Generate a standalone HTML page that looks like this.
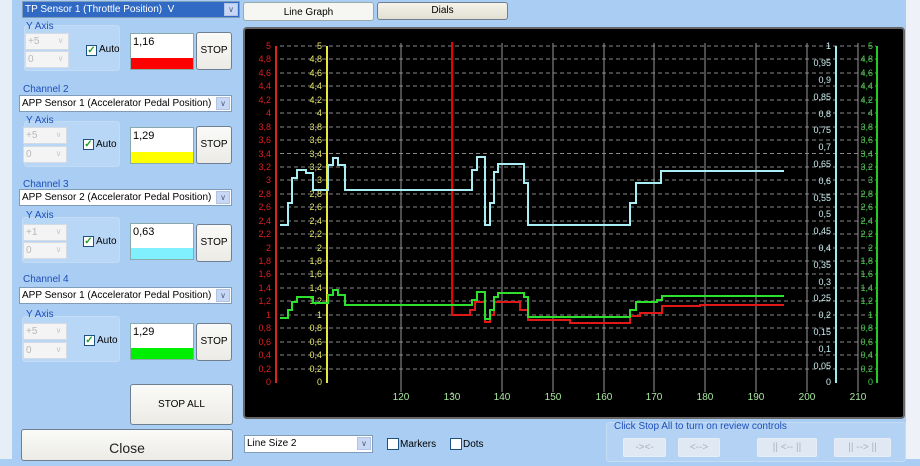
<!DOCTYPE html>
<html><head><meta charset="utf-8"><style>
*{margin:0;padding:0;box-sizing:border-box}
body{width:920px;height:459px;overflow:hidden;background:#a9cdf3;font-family:"Liberation Sans",sans-serif;font-size:10px;position:relative}
.a{position:absolute}
.strip{left:0;top:0;width:12px;height:459px;background:#e6eef8}
.rstrip{left:906px;top:0;width:14px;height:459px;background:#eef2f8}
.grp{background:#b8d6f5;border:1px solid #c4dcf4;border-radius:3px}
.dd{background:#fff;border:1px solid #7f9db9;height:17px;font-size:10px;line-height:15px;padding-left:2px;color:#000;white-space:nowrap;overflow:hidden}
.dd .ar{position:absolute;right:1px;top:1px;width:14px;height:13px;background:#c8d8f4;border:1px solid #b0c4e8;color:#4d6185;font-size:8px;text-align:center;line-height:11px}
.lbl{color:#1f4fb8;font-size:10px}
.dis{background:#f4f4f4;border:1px solid #d4dbe4;color:#b8b8b8;height:17px;width:44px;font-size:10px;line-height:15px;padding-left:2px}
.dis .ar{position:absolute;right:1px;top:1px;width:13px;height:13px;color:#c9c9c9;font-size:8px;text-align:center;line-height:12px}
.cb{width:11px;height:11px;border:1px solid #1c5180;background:#fff;font-size:10px;line-height:9px;color:#21a121;text-align:center;font-weight:bold}
.val{background:#fff;border:1px solid #8aa;font-size:11px;padding:2px 0 0 2px}
.btn{background:linear-gradient(#fafaf8,#ecebe6);border:1px solid #6f7f90;border-radius:3px;text-align:center;font-size:10px;color:#000}
.rb{background:#dfe8f3;border:1px solid #e8eef6;border-radius:2px;color:#a8b4c2;text-align:center;font-size:10px;line-height:17px}
</style></head><body>
<div class="a strip"></div><div class="a rstrip"></div>

<!-- Channel 1 -->
<div class="a dd" style="left:22px;top:1px;width:218px;background:#316ac5;color:#fff;border-color:#7f9db9">TP Sensor 1 (Throttle Position)&nbsp; V<div class="ar">&#8744;</div></div>
<div class="a grp" style="left:24px;top:25px;width:96px;height:46px"></div>
<div class="a lbl" style="left:26px;top:21px">Y Axis</div>
<div class="a dis" style="left:25px;top:33px;height:17px"><span>+5</span><div class="ar">&#8744;</div></div>
<div class="a dis" style="left:25px;top:51px"><span>0</span><div class="ar">&#8744;</div></div>
<div class="a cb" style="left:86px;top:45px">&#10003;</div><div class="a" style="left:99px;top:44px;font-size:10px">Auto</div>
<div class="a val" style="left:130px;top:33px;width:64px;height:37px">1,16<div class="a" style="left:0;top:24px;width:62px;height:11px;background:#f00"></div></div>
<div class="a btn" style="left:196px;top:32px;width:36px;height:38px;line-height:36px">STOP</div>

<!-- Channel 2 -->
<div class="a lbl" style="left:23px;top:84px">Channel 2</div>
<div class="a dd" style="left:19px;top:95px;width:213px">APP Sensor 1 (Accelerator Pedal Position)&nbsp; V<div class="ar">&#8744;</div></div>
<div class="a grp" style="left:24px;top:121px;width:96px;height:46px"></div>
<div class="a lbl" style="left:26px;top:115px">Y Axis</div>
<div class="a dis" style="left:23px;top:127px"><span>+5</span><div class="ar">&#8744;</div></div>
<div class="a dis" style="left:23px;top:146px"><span>0</span><div class="ar">&#8744;</div></div>
<div class="a cb" style="left:83px;top:139px">&#10003;</div><div class="a" style="left:96px;top:139px">Auto</div>
<div class="a val" style="left:130px;top:127px;width:64px;height:37px">1,29<div class="a" style="left:0;top:24px;width:62px;height:11px;background:#ff0"></div></div>
<div class="a btn" style="left:196px;top:126px;width:36px;height:38px;line-height:36px">STOP</div>

<!-- Channel 3 -->
<div class="a lbl" style="left:23px;top:179px">Channel 3</div>
<div class="a dd" style="left:19px;top:189px;width:213px">APP Sensor 2 (Accelerator Pedal Position)&nbsp; V<div class="ar">&#8744;</div></div>
<div class="a grp" style="left:22px;top:217px;width:98px;height:46px"></div>
<div class="a lbl" style="left:26px;top:210px">Y Axis</div>
<div class="a dis" style="left:23px;top:224px"><span>+1</span><div class="ar">&#8744;</div></div>
<div class="a dis" style="left:23px;top:242px"><span>0</span><div class="ar">&#8744;</div></div>
<div class="a cb" style="left:83px;top:236px">&#10003;</div><div class="a" style="left:96px;top:236px">Auto</div>
<div class="a val" style="left:130px;top:223px;width:64px;height:37px">0,63<div class="a" style="left:0;top:24px;width:62px;height:11px;background:#80f0ff"></div></div>
<div class="a btn" style="left:196px;top:224px;width:36px;height:38px;line-height:36px">STOP</div>

<!-- Channel 4 -->
<div class="a lbl" style="left:23px;top:274px">Channel 4</div>
<div class="a dd" style="left:19px;top:287px;width:213px">APP Sensor 1 (Accelerator Pedal Position)&nbsp; V<div class="ar">&#8744;</div></div>
<div class="a grp" style="left:22px;top:316px;width:98px;height:46px"></div>
<div class="a lbl" style="left:26px;top:309px">Y Axis</div>
<div class="a dis" style="left:23px;top:323px"><span>+5</span><div class="ar">&#8744;</div></div>
<div class="a dis" style="left:23px;top:342px"><span>0</span><div class="ar">&#8744;</div></div>
<div class="a cb" style="left:84px;top:335px">&#10003;</div><div class="a" style="left:97px;top:335px">Auto</div>
<div class="a val" style="left:130px;top:323px;width:64px;height:37px">1,29<div class="a" style="left:0;top:24px;width:62px;height:11px;background:#0e0"></div></div>
<div class="a btn" style="left:196px;top:323px;width:36px;height:38px;line-height:36px">STOP</div>

<div class="a btn" style="left:130px;top:384px;width:103px;height:41px;line-height:40px">STOP ALL</div>
<div class="a btn" style="left:21px;top:429px;width:212px;height:32px;line-height:36px;font-size:14px;color:#222">Close</div>

<!-- tabs -->
<div class="a btn" style="left:243px;top:2px;width:131px;height:19px;line-height:19px;background:#f6f6f2;border-color:#9aa">Line Graph</div>
<div class="a btn" style="left:377px;top:2px;width:131px;height:18px;line-height:16px;background:linear-gradient(#f5f3ea,#e2dfd2)">Dials</div>

<!-- bottom -->
<div class="a dd" style="left:244px;top:435px;width:129px;height:18px">Line Size 2<div class="ar">&#8744;</div></div>
<div class="a cb" style="left:387px;top:438px;width:12px;height:12px"></div><div class="a" style="left:400px;top:439px">Markers</div>
<div class="a cb" style="left:450px;top:438px;width:12px;height:12px"></div><div class="a" style="left:463px;top:439px">Dots</div>
<div class="a grp" style="left:606px;top:422px;width:300px;height:40px;background:#b4d3f4"></div>
<div class="a lbl" style="left:614px;top:421px;font-size:10px">Click Stop All to turn on review controls</div>
<div class="a rb" style="left:623px;top:438px;width:43px;height:19px">-&gt;&lt;-</div>
<div class="a rb" style="left:678px;top:438px;width:42px;height:19px">&lt;--&gt;</div>
<div class="a rb" style="left:757px;top:438px;width:60px;height:19px">|| &lt;-- ||</div>
<div class="a rb" style="left:834px;top:438px;width:57px;height:19px">|| --&gt; ||</div>

<!-- graph -->
<svg class="a" style="left:0;top:0" width="920" height="459" font-family="Liberation Sans, sans-serif" font-size="9">
<rect x="244" y="28" width="660" height="390" rx="3" fill="#000" stroke="#666" stroke-width="2"/>
<g stroke="#888" stroke-width="1" stroke-dasharray="4,3">
<path d="M280 46H876M280 59H876M280 73H876M280 86H876M280 100H876M280 113H876M280 127H876M280 140H876M280 153.5H876M280 167H876M280 180H876M280 194H876M280 207H876M280 221H876M280 234H876M280 248H876M280 261H876M280 274H876M280 288H876M280 301H876M280 315H876M280 328H876M280 342H876M280 355H876M280 369H876"/>
</g>
<g stroke="#999" stroke-width="1">
<path d="M401 43V392M502 43V392M553 43V392M604 43V392M654 43V392M705 43V392M756 43V392M807 43V392M858 43V392M452 392V395"/>
</g>
<g fill="#a8e8a0" text-anchor="middle" font-size="10">
<text x="401" y="400">120</text><text x="452" y="400">130</text><text x="502" y="400">140</text><text x="553" y="400">150</text><text x="604" y="400">160</text><text x="654" y="400">170</text><text x="705" y="400">180</text><text x="756" y="400">190</text><text x="807" y="400">200</text><text x="858" y="400">210</text>
</g>
<!-- axes -->
<path d="M276 46V383" stroke="#d22" stroke-width="2"/>
<path d="M327 46V383" stroke="#e8e840" stroke-width="2"/>
<path d="M836 46V383" stroke="#9ee" stroke-width="2"/>
<path d="M877 46V383" stroke="#2c2" stroke-width="2"/>
<path d="M452 42V315" stroke="#e00" stroke-width="2"/>
<g fill="#e02020" text-anchor="end">
<text x="271" y="49">5</text><text x="271" y="62">4,8</text><text x="271" y="76">4,6</text><text x="271" y="89">4,4</text><text x="271" y="103">4,2</text><text x="271" y="116">4</text><text x="271" y="130">3,8</text><text x="271" y="143">3,6</text><text x="271" y="157">3,4</text><text x="271" y="170">3,2</text><text x="271" y="183">3</text><text x="271" y="197">2,8</text><text x="271" y="210">2,6</text><text x="271" y="224">2,4</text><text x="271" y="237">2,2</text><text x="271" y="251">2</text><text x="271" y="264">1,8</text><text x="271" y="277">1,6</text><text x="271" y="291">1,4</text><text x="271" y="304">1,2</text><text x="271" y="318">1</text><text x="271" y="331">0,8</text><text x="271" y="345">0,6</text><text x="271" y="358">0,4</text><text x="271" y="372">0,2</text><text x="271" y="385">0</text>
</g>
<g fill="#e8e860" text-anchor="end">
<text x="322" y="49">5</text><text x="322" y="62">4,8</text><text x="322" y="76">4,6</text><text x="322" y="89">4,4</text><text x="322" y="103">4,2</text><text x="322" y="116">4</text><text x="322" y="130">3,8</text><text x="322" y="143">3,6</text><text x="322" y="157">3,4</text><text x="322" y="170">3,2</text><text x="322" y="183">3</text><text x="322" y="197">2,8</text><text x="322" y="210">2,6</text><text x="322" y="224">2,4</text><text x="322" y="237">2,2</text><text x="322" y="251">2</text><text x="322" y="264">1,8</text><text x="322" y="277">1,6</text><text x="322" y="291">1,4</text><text x="322" y="304">1,2</text><text x="322" y="318">1</text><text x="322" y="331">0,8</text><text x="322" y="345">0,6</text><text x="322" y="358">0,4</text><text x="322" y="372">0,2</text><text x="322" y="385">0</text>
</g>
<g fill="#c8eef0" text-anchor="end">
<text x="831" y="49">1</text><text x="831" y="66">0,95</text><text x="831" y="83">0,9</text><text x="831" y="100">0,85</text><text x="831" y="117">0,8</text><text x="831" y="133">0,75</text><text x="831" y="150">0,7</text><text x="831" y="167">0,65</text><text x="831" y="184">0,6</text><text x="831" y="201">0,55</text><text x="831" y="217">0,5</text><text x="831" y="234">0,45</text><text x="831" y="251">0,4</text><text x="831" y="268">0,35</text><text x="831" y="285">0,3</text><text x="831" y="301">0,25</text><text x="831" y="318">0,2</text><text x="831" y="335">0,15</text><text x="831" y="352">0,1</text><text x="831" y="369">0,05</text><text x="831" y="385">0</text>
</g>
<g fill="#40d040" text-anchor="end">
<text x="873" y="49">5</text><text x="873" y="62">4,8</text><text x="873" y="76">4,6</text><text x="873" y="89">4,4</text><text x="873" y="103">4,2</text><text x="873" y="116">4</text><text x="873" y="130">3,8</text><text x="873" y="143">3,6</text><text x="873" y="157">3,4</text><text x="873" y="170">3,2</text><text x="873" y="183">3</text><text x="873" y="197">2,8</text><text x="873" y="210">2,6</text><text x="873" y="224">2,4</text><text x="873" y="237">2,2</text><text x="873" y="251">2</text><text x="873" y="264">1,8</text><text x="873" y="277">1,6</text><text x="873" y="291">1,4</text><text x="873" y="304">1,2</text><text x="873" y="318">1</text><text x="873" y="331">0,8</text><text x="873" y="345">0,6</text><text x="873" y="358">0,4</text><text x="873" y="372">0,2</text><text x="873" y="385">0</text>
</g>
<!-- curves -->
<path fill="none" stroke="#e01818" stroke-width="2" d="M452 315H470V310H475V302H485V322H490V315H494V302H520V310H528V320H570V323H630V316H640V313H662V306H700V305H784"/>
<path fill="none" stroke="#2ee02e" stroke-width="2" d="M280 318H288V310H292V302H297V297H313V303H328V295H333V290H338V295H345V305H472V300H477V292H485V319H490V310H494V297H498V293H524V297H528V317H630V310H636V302H657V300H662V296H784"/>
<path fill="none" stroke="#a8eef4" stroke-width="2" d="M280 225H288V203H292V178H297V170H306V173H313V190H328V165H333V158H338V165H345V190H472V170H477V157H485V225H490V203H494V172H498V164H524V183H528V225H630V203H636V183H661V171H784"/>
</svg>
</body></html>
